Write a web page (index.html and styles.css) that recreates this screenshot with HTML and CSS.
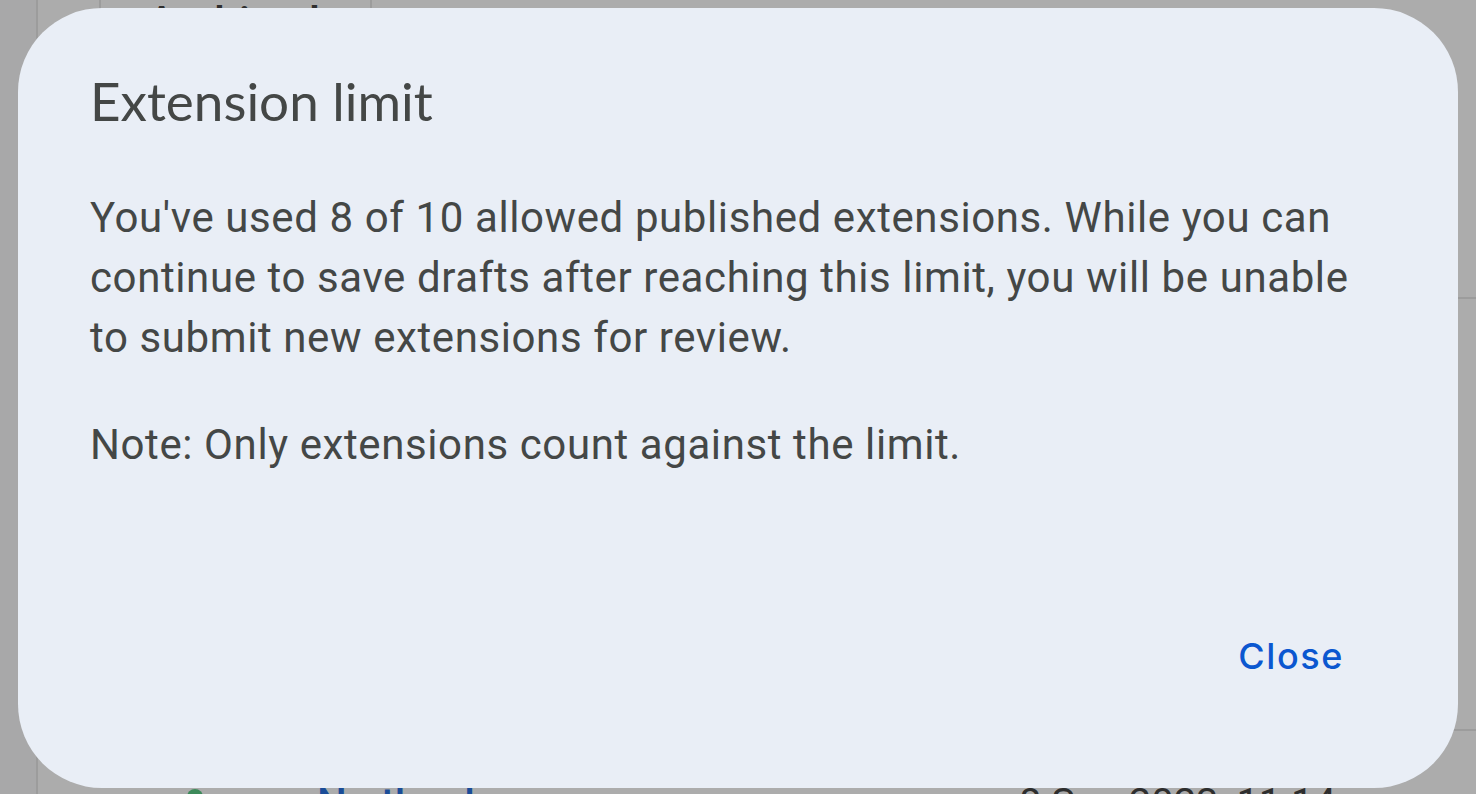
FILE: index.html
```html
<!DOCTYPE html>
<html lang="en">
<head>
<meta charset="utf-8">
<title>Extension limit</title>
<link rel="stylesheet" href="styles.css">
</head>
<body>
<div class="page">
  <div class="bg">
    <div class="rail"></div>
    <div class="content">
      <div class="row row-top">
        <div class="cell cell-a"></div>
        <div class="cell cell-b"><span class="bg-title">Archived</span></div>
        <div class="cell cell-c"></div>
      </div>
      <div class="row row-mid"></div>
      <div class="row row-bottom">
        <span class="dot"></span>
        <span class="bg-link">No thanks</span>
        <span class="bg-text">8 Sep 2023, 11:14</span>
      </div>
    </div>
  </div>

  <div class="dialog" role="dialog" aria-labelledby="dlg-title">
    <h2 class="dialog-title" id="dlg-title">Extension limit</h2>
    <div class="dialog-body">
      <p class="para">You've used 8 of 10 allowed published extensions. While you can continue to save drafts after reaching this limit, you will be unable to submit new extensions for review.</p>
      <p class="para">Note: Only extensions count against the limit.</p>
    </div>
    <div class="dialog-actions">
      <button class="text-btn" type="button">Close</button>
    </div>
  </div>
</div>
</body>
</html>
```

FILE: styles.css
```css
html, body {
  margin: 0;
  padding: 0;
}

body {
  background: #ababab;
  font-family: Roboto, "Liberation Sans", sans-serif;
}

.page {
  position: relative;
  width: 1476px;
  height: 794px;
  overflow: hidden;
  background: #acacac;
}

/* ---- dimmed page behind the dialog ---- */
.bg {
  display: flex;
  height: 100%;
}

.rail {
  width: 36px;
  flex: none;
  background: #a8a8a9;
  border-right: 2px solid #9c9c9c;
}

.content {
  flex: 1;
  display: flex;
  flex-direction: column;
  min-height: 0;
}

.row {
  display: flex;
  flex: none;
}

.row-top {
  height: 297px;
  border-bottom: 2px solid #9c9c9c;
}

.cell {
  height: 100%;
  border-right: 2px solid #9c9c9c;
}

.cell-a {
  width: 61px;
}

.cell-b {
  width: 271px;
  padding-left: 46px;
  box-sizing: border-box;
}

.cell-c {
  flex: 1;
  border-right: none;
}

.bg-title {
  display: block;
  margin-top: -3px;
  font-size: 44px;
  line-height: 52px;
  color: #2e2e2e;
  font-weight: 500;
}

.row-mid {
  height: 430px;
  border-bottom: 2px solid #9c9c9c;
}

.row-bottom {
  flex: 1 1 auto;
  min-height: 0;
  overflow: hidden;
  align-items: flex-start;
  padding-top: 52px;
}

.dot {
  flex: none;
  width: 16px;
  height: 16px;
  border-radius: 50%;
  background: #3d8a5a;
  margin-left: 149px;
  margin-top: 6px;
}

.bg-link {
  margin-left: 114px;
  font-size: 42px;
  line-height: 42px;
  color: #1a4c98;
  font-weight: 500;
}

.bg-text {
  margin-left: auto;
  margin-right: 140px;
  font-size: 40px;
  line-height: 42px;
  color: #2e2e2e;
}

/* ---- dialog ---- */
.dialog {
  position: absolute;
  left: 18px;
  top: 8px;
  width: 1440px;
  height: 780px;
  box-sizing: border-box;
  padding: 66px 72px 72px;
  background: #e9eef6;
  border-radius: 84px;
  display: flex;
  flex-direction: column;
}

.dialog-title {
  margin: 0 0 60px;
  font-family: Lato, "Open Sans", sans-serif;
  font-weight: 400;
  font-size: 53px;
  line-height: 54px;
  color: #444746;
}

.dialog-body {
  flex: 1;
}

.para {
  margin: 0 0 47px;
  font-family: Roboto, "Liberation Sans", sans-serif;
  font-size: 42px;
  line-height: 60px;
  color: #444746;
  letter-spacing: 0.6px;
}

.dialog-actions {
  display: flex;
  justify-content: flex-end;
}

.text-btn {
  height: 120px;
  padding: 0 42px;
  border: none;
  background: transparent;
  font-family: Inter, "Open Sans", sans-serif;
  font-weight: 500;
  font-size: 36px;
  letter-spacing: 1.6px;
  color: #0b57d0;
  cursor: pointer;
}
```
